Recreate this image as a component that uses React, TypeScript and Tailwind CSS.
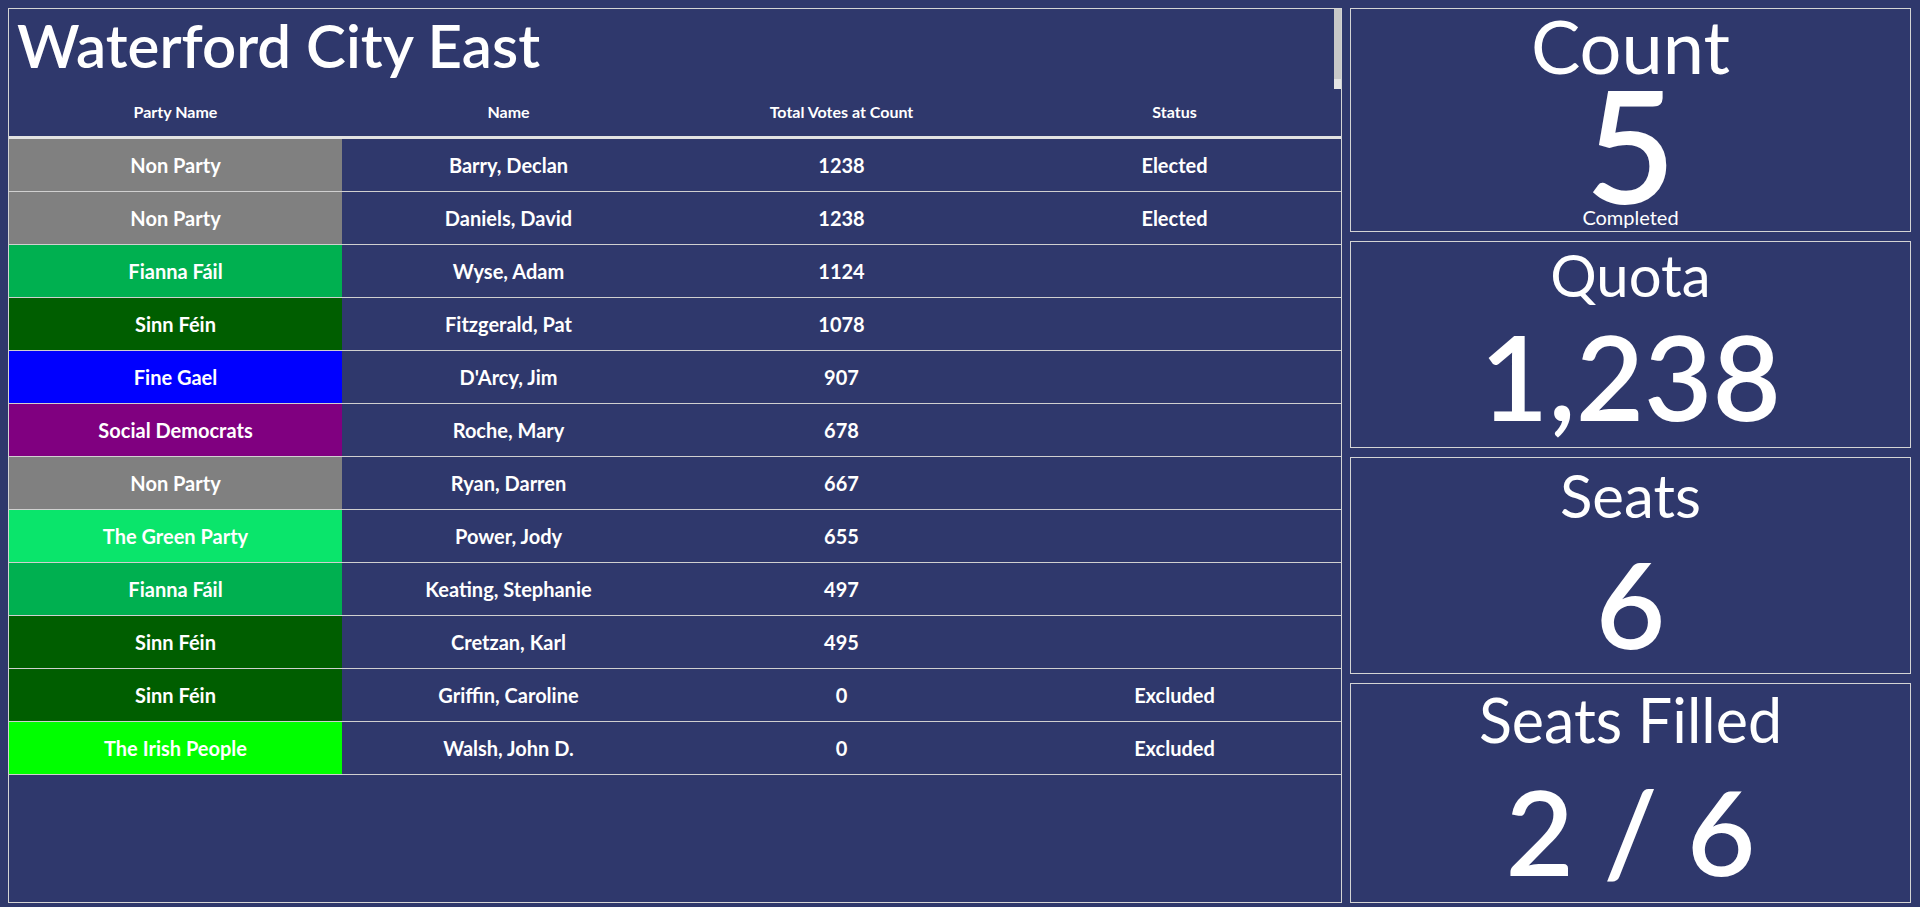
import React from "react";

type Row = { party: string; color: string; name: string; votes: string; status: string };

const rows: Row[] = [
  { party: "Non Party", color: "bg-[#808080]", name: "Barry, Declan", votes: "1238", status: "Elected" },
  { party: "Non Party", color: "bg-[#808080]", name: "Daniels, David", votes: "1238", status: "Elected" },
  { party: "Fianna Fáil", color: "bg-[#00b050]", name: "Wyse, Adam", votes: "1124", status: "" },
  { party: "Sinn Féin", color: "bg-[#005e00]", name: "Fitzgerald, Pat", votes: "1078", status: "" },
  { party: "Fine Gael", color: "bg-[#0000ff]", name: "D'Arcy, Jim", votes: "907", status: "" },
  { party: "Social Democrats", color: "bg-[#800080]", name: "Roche, Mary", votes: "678", status: "" },
  { party: "Non Party", color: "bg-[#808080]", name: "Ryan, Darren", votes: "667", status: "" },
  { party: "The Green Party", color: "bg-[#0ae56b]", name: "Power, Jody", votes: "655", status: "" },
  { party: "Fianna Fáil", color: "bg-[#00b050]", name: "Keating, Stephanie", votes: "497", status: "" },
  { party: "Sinn Féin", color: "bg-[#005e00]", name: "Cretzan, Karl", votes: "495", status: "" },
  { party: "Sinn Féin", color: "bg-[#005e00]", name: "Griffin, Caroline", votes: "0", status: "Excluded" },
  { party: "The Irish People", color: "bg-[#00ff00]", name: "Walsh, John D.", votes: "0", status: "Excluded" },
];

export default function App() {
  return (
    <div
      className="flex h-[907px] w-[1920px] gap-[8px] bg-[#2f386c] pt-[8px] pb-[4px] pl-[8px] pr-[9px] text-white"
      style={{ fontFamily: "Lato, 'Open Sans', sans-serif" }}
    >
      {/* Left panel */}
      <div className="relative flex w-[1334px] flex-col border border-[#d4d4d4]">
        <div className="absolute right-0 top-0 flex w-[7px] flex-col">
          <div className="h-[70px] bg-[#c8c8c8]" />
          <div className="h-[10px] bg-[#e4e4e4]" />
        </div>
        <div className="h-[79px] pl-[8px] pt-[6px]">
          <div className="text-[60px] font-semibold leading-[60px]">Waterford City East</div>
        </div>
        <div className="grid h-[51px] grid-cols-4 border-b-[3px] border-[#e2e2e2] text-[16px] font-bold">
          <div className="flex items-center justify-center">Party Name</div>
          <div className="flex items-center justify-center">Name</div>
          <div className="flex items-center justify-center">Total Votes at Count</div>
          <div className="flex items-center justify-center">Status</div>
        </div>
        {rows.map((r, i) => (
          <div key={i} className="grid h-[53px] grid-cols-4 border-b border-[#d0d0d0] text-[20px] font-bold">
            <div className={`flex items-center justify-center ${r.color}`}>{r.party}</div>
            <div className="flex items-center justify-center">{r.name}</div>
            <div className="flex items-center justify-center">{r.votes}</div>
            <div className="flex items-center justify-center">{r.status}</div>
          </div>
        ))}
      </div>

      {/* Right column */}
      <div className="flex flex-1 flex-col gap-[9px]">
        <div className="flex h-[224px] flex-col items-center border border-[#d4d4d4]">
          <div className="text-[74px] leading-[74px]">Count</div>
          <div className="mt-[1px] h-[120px] text-[156px] font-semibold leading-[120px]">5</div>
          <div className="mt-[3px] text-[20px] leading-[20px]">Completed</div>
        </div>
        <div className="flex h-[207px] flex-col items-center border border-[#d4d4d4]">
          <div className="mt-[4px] text-[58px] leading-[58px]">Quota</div>
          <div className="mt-[13px] text-[118px] font-semibold leading-[118px]">1,238</div>
        </div>
        <div className="flex h-[217px] flex-col items-center border border-[#d4d4d4]">
          <div className="mt-[7px] text-[60px] leading-[60px]">Seats</div>
          <div className="mt-[18px] text-[120px] font-semibold leading-[120px]">6</div>
        </div>
        <div className="flex h-[220px] flex-col items-center border border-[#d4d4d4]">
          <div className="mt-[5px] text-[61px] leading-[61px]">Seats Filled</div>
          <div className="mt-[22px] text-[118px] font-semibold leading-[118px]">2 / 6</div>
        </div>
      </div>
    </div>
  );
}
